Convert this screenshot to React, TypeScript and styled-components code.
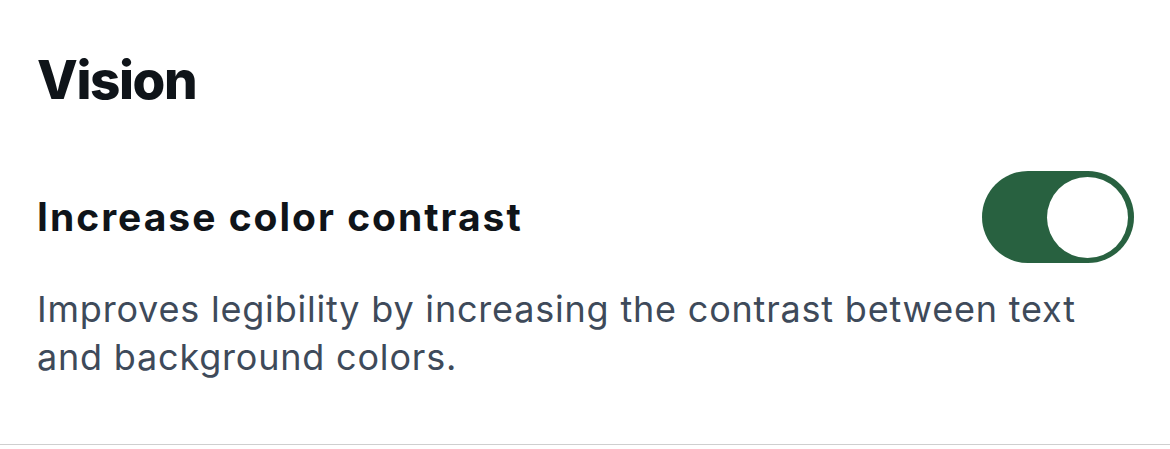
import styled, { createGlobalStyle } from "styled-components";
import { useState } from "react";

const GlobalStyle = createGlobalStyle`
  html, body {
    margin: 0;
    padding: 0;
    background: #ffffff;
  }
  body {
    font-family: Inter, "Noto Sans", "Liberation Sans", sans-serif;
    -webkit-font-smoothing: antialiased;
  }
`;

const Page = styled.div`
  width: 1170px;
  height: 449px;
  display: flex;
  flex-direction: column;
  box-sizing: border-box;
`;

const Section = styled.section`
  display: flex;
  flex-direction: column;
  padding: 47px 36px 0 37px;
  flex: 1;
`;

const Heading = styled.h2`
  margin: 0;
  font-size: 53px;
  line-height: 66px;
  font-weight: 800;
  color: #0f1419;
  letter-spacing: -1.4px;
`;

const SettingRow = styled.div`
  display: flex;
  align-items: center;
  justify-content: space-between;
  margin-top: 58px;
`;

const Label = styled.span`
  font-size: 39px;
  line-height: 46px;
  font-weight: 700;
  color: #0f1419;
  letter-spacing: 2px;
`;

const Description = styled.p`
  margin: 22px 0 0;
  font-size: 36px;
  line-height: 48px;
  font-weight: 400;
  color: #3e4a5a;
  letter-spacing: 0.8px;
`;

const Track = styled.button<{ $on: boolean }>`
  width: 152px;
  height: 92px;
  padding: 0 6px;
  border: none;
  border-radius: 46px;
  background: ${(p) => (p.$on ? "#286140" : "#cfd9de")};
  display: flex;
  flex-shrink: 0;
  align-items: center;
  justify-content: ${(p) => (p.$on ? "flex-end" : "flex-start")};
  box-sizing: border-box;
  cursor: pointer;
`;

const Knob = styled.span`
  width: 81px;
  height: 81px;
  border-radius: 50%;
  background: #ffffff;
`;

const Divider = styled.hr`
  margin: 0 0 4px;
  border: none;
  border-top: 1px solid #cfcfcf;
`;

const Switch = ({ on, onToggle }: { on: boolean; onToggle: () => void }) => (
  <Track role="switch" aria-checked={on} $on={on} onClick={onToggle}>
    <Knob />
  </Track>
);

export default function App() {
  const [contrast, setContrast] = useState(true);

  return (
    <>
      <GlobalStyle />
      <Page>
        <Section>
          <Heading>Vision</Heading>
          <SettingRow>
            <Label>Increase color contrast</Label>
            <Switch on={contrast} onToggle={() => setContrast((v) => !v)} />
          </SettingRow>
          <Description>
            Improves legibility by increasing the contrast between text and background colors.
          </Description>
        </Section>
        <Divider />
      </Page>
    </>
  );
}
